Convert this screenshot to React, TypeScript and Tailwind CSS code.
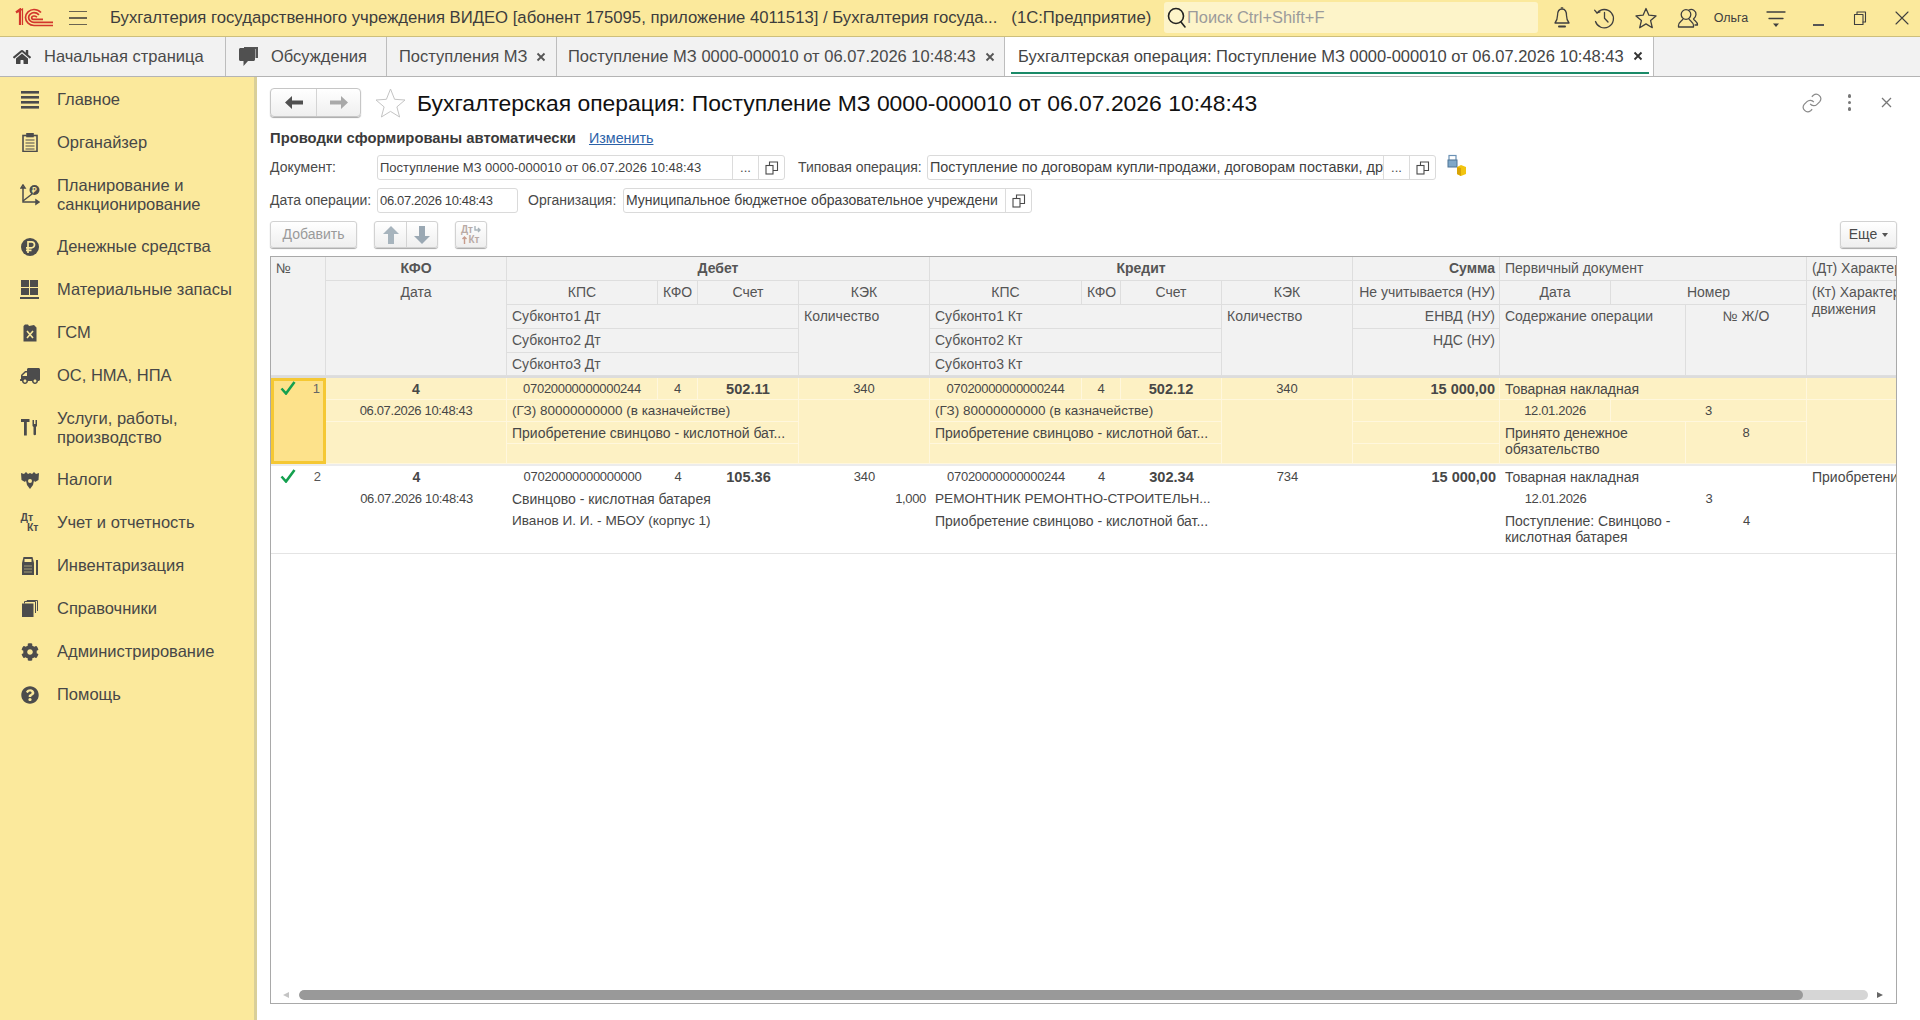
import React from "react";
import { FaCog, FaQuestionCircle, FaTruck, FaHome } from "react-icons/fa";

const ink = "#4c4c4c";

function Logo1C() {
  return (
    <svg width="40" height="20" viewBox="0 0 40 20" fill="none" stroke="#d2372c" strokeWidth="1.7">
      <path d="M1 4.5 5 1.5V17" strokeWidth="2.2" />
      <path d="M3 4 7.5 1V17" strokeWidth="1.2" />
      <path d="M26 4.5C24 2.5 21.5 1.5 19 1.5 14.5 1.5 10.5 5 10.5 9.5S14.5 17.5 19 17.5H38" />
      <path d="M24 6.8C22.8 5.6 21 4.7 19 4.7 16.3 4.7 13.6 6.8 13.6 9.5S16.3 14.4 19 14.4H38" />
      <path d="M22 9.2C21 8.4 20 8 19 8 17.6 8 16.7 8.8 16.7 9.7 16.7 10.7 17.6 11.4 19 11.4H28" />
    </svg>
  );
}

function Icon({ children, w = 24, h = 24, vb = "0 0 24 24", sw = 1.3, color = "#3f3f3f" }: { children: React.ReactNode; w?: number; h?: number; vb?: string; sw?: number; color?: string }) {
  return (
    <svg width={w} height={h} viewBox={vb} fill="none" stroke={color} strokeWidth={sw} strokeLinecap="round" strokeLinejoin="round">
      {children}
    </svg>
  );
}

function TopSlot({ children }: { children: React.ReactNode }) {
  return <div className="w-[42px] h-full flex items-center justify-center shrink-0">{children}</div>;
}

function TitleBar() {
  return (
    <div className="h-[37px] shrink-0 flex items-center bg-[#fbe99c] border-b border-[#cdbf7c] text-[#3d3d3d]">
      <div className="ml-[15px] w-[54px] flex items-center shrink-0"><Logo1C /></div>
      <div className="w-[18px] flex flex-col gap-[5px] shrink-0">
        <div className="h-[1.5px] bg-[#6a6450]" />
        <div className="h-[1.5px] bg-[#6a6450]" />
        <div className="h-[1.5px] bg-[#6a6450]" />
      </div>
      <div className="ml-[23px] w-[1054px] shrink-0 whitespace-nowrap overflow-hidden text-[16.7px]">
        <span>Бухгалтерия государственного учреждения ВИДЕО [абонент 175095, приложение 4011513] / Бухгалтерия госуда...</span>
        <span className="ml-[14px]">(1С:Предприятие)</span>
      </div>
      <div className="w-[374px] h-[31px] mb-[2px] shrink-0 rounded-[3px] bg-[#fdf4c9] flex items-center pl-[1px] text-[16.4px] text-[#9b9b9b]">
        <Icon w={22} h={24} vb="0 0 22 24" sw={1.6} color="#222">
          <circle cx="11" cy="11" r="7.5" />
          <path d="M16 17 20 22" />
        </Icon>
        <span>Поиск Ctrl+Shift+F</span>
      </div>
      <div className="w-[3px] shrink-0" />
      <TopSlot>
        <Icon>
          <path d="M12 3C8.5 3 7.5 6 7.5 9.5 7.5 13 6.5 15 5 17H19C17.5 15 16.5 13 16.5 9.5 16.5 6 15.5 3 12 3Z" />
          <path d="M9 20.5H15" strokeWidth="2" />
          <path d="M11.3 1.8H12.7" />
        </Icon>
      </TopSlot>
      <TopSlot>
        <Icon>
          <path d="M5.2 6.8A9.2 9.2 0 1 1 3.5 15.5" />
          <path d="M2.6 4.2 5 7 8 5.8" />
          <path d="M12.5 6.5V12.2L16 16" />
        </Icon>
      </TopSlot>
      <TopSlot>
        <Icon>
          <path d="M12 2.5 14.9 9.2 22 9.9 16.6 14.6 18.3 21.7 12 17.9 5.7 21.7 7.4 14.6 2 9.9 9.1 9.2Z" />
        </Icon>
      </TopSlot>
      <TopSlot>
        <Icon>
          <circle cx="10" cy="8.5" r="4.8" />
          <path d="M7 13C6 15 2.5 16 2.5 19.5V21H17.5V19.5C17.5 16 14 15 13 13" />
          <path d="M13 4A4.8 4.8 0 0 1 20 8.5C20 10.5 18.5 12 17.5 13 18.5 15 21.5 15.5 21.5 19H19" />
        </Icon>
      </TopSlot>
      <div className="w-[46px] shrink-0 text-[12.5px] text-center pr-[2px]">Ольга</div>
      <TopSlot>
        <Icon>
          <path d="M3 6H21M5 12.5H19" />
          <path d="M9 17.5H15L12 21Z" fill="#3f3f3f" stroke="none" />
        </Icon>
      </TopSlot>
      <TopSlot>
        <div className="w-[11px] h-[1.5px] bg-[#555] mt-[14px]" />
      </TopSlot>
      <TopSlot>
        <Icon w={16} h={16} vb="0 0 16 16" sw={1.1}>
          <rect x="2.5" y="4.5" width="8.5" height="10" />
          <path d="M5 4V2H13.5V12H11" />
        </Icon>
      </TopSlot>
      <TopSlot>
        <Icon w={16} h={16} vb="0 0 16 16" sw={1.1}>
          <path d="M2 2 14 14M14 2 2 14" />
        </Icon>
      </TopSlot>
    </div>
  );
}

function X({ dark }: { dark?: boolean }) {
  return (
    <svg width="10" height="10" viewBox="0 0 10 10" stroke={dark ? "#333" : "#555"} strokeWidth="1.8">
      <path d="M1.5 1.5 8.5 8.5M8.5 1.5 1.5 8.5" />
    </svg>
  );
}

function TabBar() {
  return (
    <div className="h-[40px] shrink-0 flex bg-[#f2f2f2] border-b border-[#b4b4b4] text-[16.5px] text-[#4a4a4a] whitespace-nowrap">
      <div className="w-[226px] border-r border-[#bdbdbd] flex items-center pl-[13px] gap-[13px]">
        <FaHome size={18} color="#454545" />
        <span>Начальная страница</span>
      </div>
      <div className="w-[161px] border-r border-[#bdbdbd] flex items-center pl-[12px] gap-[12px]">
        <svg width="21" height="23" viewBox="0 0 21 23">
          <path d="M6 2H20V13H17.5V4H6Z" fill="#555" />
          <path d="M1 4.5C1 3.7 1.7 3 2.5 3H15.5C16.3 3 17 3.7 17 4.5V14.5C17 15.3 16.3 16 15.5 16H10L5.5 21V16H2.5C1.7 16 1 15.3 1 14.5Z" fill="#505050" />
        </svg>
        <span>Обсуждения</span>
      </div>
      <div className="w-[170px] border-r border-[#bdbdbd] flex items-center pl-[12px] gap-[8px]">
        <span>Поступления МЗ</span>
        <X />
      </div>
      <div className="w-[448px] border-r border-[#bdbdbd] flex items-center pl-[11px] gap-[9px]">
        <span>Поступление МЗ 0000-000010 от 06.07.2026 10:48:43</span>
        <X />
      </div>
      <div className="w-[649px] border-r border-[#bdbdbd] bg-white flex flex-col">
        <div className="flex-1 flex items-center pl-[13px] pt-[3px] gap-[9px] text-[#444]">
          <span>Бухгалтерская операция: Поступление МЗ 0000-000010 от 06.07.2026 10:48:43</span>
          <X dark />
        </div>
        <div className="h-[2px] ml-[6px] mr-[4px] mb-[2px] bg-[#1a8a68]" />
      </div>
    </div>
  );
}

function NavItem({ icon, lines }: { icon: React.ReactNode; lines: string[] }) {
  return (
    <div className={"flex items-center pl-[16px] text-[16.5px] leading-[19px] text-[#474747] " + (lines.length > 1 ? "py-[11.5px]" : "py-[12px]")}>
      <div className="w-[27px] h-[19px] flex items-center justify-center shrink-0">{icon}</div>
      <div className="ml-[14px]">
        {lines.map((l) => (
          <div key={l} className="whitespace-nowrap">{l}</div>
        ))}
      </div>
    </div>
  );
}

function Sidebar() {
  const items: { icon: React.ReactNode; lines: string[] }[] = [
    { lines: ["Главное"], icon: (
      <svg width="18" height="18" viewBox="0 0 18 18" fill={ink}><rect y="0" width="18" height="2.6" /><rect y="5" width="18" height="2.6" /><rect y="10" width="18" height="2.6" /><rect y="15" width="18" height="2.6" /></svg>
    ) },
    { lines: ["Органайзер"], icon: (
      <svg width="16" height="19" viewBox="0 0 16 19" fill="none" stroke={ink} strokeWidth="1.6"><rect x="1" y="2.5" width="14" height="16" /><rect x="5" y="0.5" width="6" height="3" fill={ink} /><path d="M3.5 7H12.5M3.5 10H12.5M3.5 13H12.5M3.5 16H12.5" strokeWidth="1.2" /></svg>
    ) },
    { lines: ["Планирование и", "санкционирование"], icon: (
      <svg width="20" height="22" viewBox="0 0 20 22" fill="none" stroke={ink} strokeWidth="1.5"><path d="M3 3V18H19M3 1 1 4H5ZM19 18 16 16V20Z" /><path d="M3 17 12 10" /><circle cx="14.5" cy="6" r="5" fill={ink} stroke="none" /><text x="14.5" y="9" fontSize="8" fontWeight="700" textAnchor="middle" fill="#fbe99c" stroke="none" fontFamily="Liberation Sans">₽</text></svg>
    ) },
    { lines: ["Денежные средства"], icon: (
      <svg width="18" height="18" viewBox="0 0 18 18"><circle cx="9" cy="9" r="9" fill={ink} /><path d="M7 15V3.8H10.5A3 3 0 0 1 10.5 9.8H5M5 12.3H10.5" fill="none" stroke="#fbe99c" strokeWidth="1.7" /></svg>
    ) },
    { lines: ["Материальные запасы"], icon: (
      <svg width="19" height="19" viewBox="0 0 19 19" fill={ink}><rect x="1" y="0" width="8" height="7" /><rect x="10" y="0" width="8" height="7" /><rect x="1" y="8" width="8" height="7" /><rect x="10" y="8" width="8" height="7" /><rect y="17" width="19" height="2" /></svg>
    ) },
    { lines: ["ГСМ"], icon: (
      <svg width="14" height="18" viewBox="0 0 14 18"><path d="M0.5 2 2 0.5H5L6 2 11 1 13.5 3.5V17.5H0.5Z" fill={ink} /><path d="M4 7 10 14M10 7 4 14" stroke="#fbe99c" strokeWidth="1.6" /></svg>
    ) },
    { lines: ["ОС, НМА, НПА"], icon: <FaTruck size={20} color={ink} className="scale-x-[-1]" /> },
    { lines: ["Услуги, работы,", "производство"], icon: (
      <svg width="17" height="17" viewBox="0 0 17 17" fill={ink}><path d="M0 0H8.5V3H5.8V16.5H3V3H0Z" /><path d="M11.5 1H13V5H14.5V1H16V7L15 8V15.5A1.5 1.5 0 0 1 12.5 15.5V8L11.5 7Z" /></svg>
    ) },
    { lines: ["Налоги"], icon: (
      <svg width="18" height="18" viewBox="0 0 18 18" fill={ink}><path d="M0 2 3 3 5 1 7 3 9 2 11 3 13 1 15 3 18 2 17.5 9 14 11 13 9.5 12 14 9 18 6 14 5 9.5 4 11 0.5 9Z" /><circle cx="9" cy="10" r="2" fill="#fbe99c" /></svg>
    ) },
    { lines: ["Учет и отчетность"], icon: (
      <div className="w-[18px] h-[19px] flex flex-col text-[10.5px] font-bold leading-[9.5px] text-[#4c4c4c]">
        <span>Дт</span>
        <span className="self-end">Кт</span>
      </div>
    ) },
    { lines: ["Инвентаризация"], icon: (
      <svg width="16" height="18" viewBox="0 0 16 18" fill={ink}><path d="M0 6 1.5 0H10.5L12 6V18H0Z" /><rect x="2.5" y="2" width="7" height="3" fill="#fbe99c" /><path d="M2.5 9H9.5M2.5 12H9.5M2.5 15H9.5" stroke="#fbe99c" strokeWidth="1" strokeDasharray="1 1" /><rect x="14" y="3" width="2" height="15" /></svg>
    ) },
    { lines: ["Справочники"], icon: (
      <svg width="16" height="17" viewBox="0 0 16 17" fill="none" stroke={ink} strokeWidth="1"><rect x="0" y="4" width="11" height="13" fill={ink} /><path d="M2.5 3.5V1.5H13.5V13M5 1V0.5H15.5V11" /></svg>
    ) },
    { lines: ["Администрирование"], icon: <FaCog size={18} color={ink} /> },
    { lines: ["Помощь"], icon: <FaQuestionCircle size={18} color={ink} /> },
  ];
  return (
    <div className="w-[257px] shrink-0 pt-[1px] bg-[#fbe99c] border-r-[3px] border-[#d9cf99]">
      {items.map((it) => (
        <NavItem key={it.lines[0]} icon={it.icon} lines={it.lines} />
      ))}
    </div>
  );
}

function CopyIcon() {
  return (
    <svg width="14" height="14" viewBox="0 0 14 14" fill="none" stroke="#4a4a4a" strokeWidth="1.1">
      <rect x="1" y="4.5" width="7" height="8.5" />
      <path d="M4.5 4.5V1H12.5V9.5H8" />
    </svg>
  );
}

function FieldBtn({ children }: { children: React.ReactNode }) {
  return <div className="w-[26px] h-full shrink-0 border-l border-[#dcdcdc] flex items-center justify-center text-[13px] text-[#4a4a4a]">{children}</div>;
}

function Field({ w, text, dots, copy, size }: { w: string; text: string; dots?: boolean; copy?: boolean; size: string }) {
  return (
    <div className={"h-[25px] shrink-0 flex items-center border border-[#dadada] rounded-[3px] bg-white text-[#3f3f3f] " + w}>
      <div className={"flex-1 min-w-0 pl-[2px] whitespace-nowrap overflow-hidden " + size}>{text}</div>
      {dots && <FieldBtn>...</FieldBtn>}
      {copy && <FieldBtn><CopyIcon /></FieldBtn>}
    </div>
  );
}

const btn = "h-[27px] shrink-0 rounded-[3px] border border-[#d2d2d2] bg-linear-to-b from-white to-[#efefef] shadow-[0_1px_1px_#a8a8a8] flex items-center justify-center";

function FormHead() {
  return (
    <div className="flex items-start pt-[11px] h-[47px] shrink-0">
      <div className="w-[91px] h-[29px] shrink-0 rounded-[4px] border border-[#c6c6c6] bg-linear-to-b from-white to-[#efefef] shadow-[0_1px_1px_#a8a8a8] flex">
        <div className="w-[46px] border-r border-[#d4d4d4] flex items-center justify-center">
          <svg width="18" height="13" viewBox="0 0 18 13" fill="#505050"><path d="M7 0V4.5H18V8.5H7V13L0 6.5Z" /></svg>
        </div>
        <div className="flex-1 flex items-center justify-center">
          <svg width="18" height="13" viewBox="0 0 18 13" fill="#a9a9a9"><path d="M11 0V4.5H0V8.5H11V13L18 6.5Z" /></svg>
        </div>
      </div>
      <div className="ml-[14px] shrink-0">
        <svg width="31" height="30" viewBox="0 0 31 30" fill="none" stroke="#c4c4c4" strokeWidth="1">
          <path d="M15.5 1 19.6 11.3 30 12 21.9 18.9 24.6 29 15.5 23.4 6.4 29 9.1 18.9 1 12 11.4 11.3Z" />
        </svg>
      </div>
      <h1 className="ml-[11px] text-[22.9px] leading-[30px] text-[#111] whitespace-nowrap flex-1">
        Бухгалтерская операция: Поступление МЗ 0000-000010 от 06.07.2026 10:48:43
      </h1>
      <div className="flex items-center h-[29px] pr-[5px] gap-[25px]">
        <svg width="22" height="22" viewBox="0 0 24 24" fill="none" stroke="#8a8a8a" strokeWidth="1.3">
          <path d="M10 13a5 5 0 0 0 7.5.5l3-3a5 5 0 0 0-7-7l-1.7 1.7" />
          <path d="M14 11a5 5 0 0 0-7.5-.5l-3 3a5 5 0 0 0 7 7l1.7-1.7" />
        </svg>
        <div className="flex flex-col gap-[3px]">
          <div className="w-[3.5px] h-[3.5px] rounded-full bg-[#777]" />
          <div className="w-[3.5px] h-[3.5px] rounded-full bg-[#777]" />
          <div className="w-[3.5px] h-[3.5px] rounded-full bg-[#777]" />
        </div>
        <svg className="ml-[5px]" width="11" height="11" viewBox="0 0 11 11" stroke="#777" strokeWidth="1.3"><path d="M1 1 10 10M10 1 1 10" /></svg>
      </div>
    </div>
  );
}

function Form() {
  return (
    <div className="shrink-0 text-[14px] text-[#4a4a4a]">
      <div className="h-[27px] pt-[2px] flex items-center gap-[13px]">
        <span className="font-bold text-[14.8px] text-[#3a3a3a]">Проводки сформированы автоматически</span>
        <span className="text-[14.3px] text-[#2c62a8] underline">Изменить</span>
      </div>
      <div className="h-[33px] flex items-center">
        <span className="w-[107px] shrink-0">Документ:</span>
        <Field w="w-[408px]" size="text-[13px]" text="Поступление МЗ 0000-000010 от 06.07.2026 10:48:43" dots copy />
        <span className="ml-[13px] w-[129px] shrink-0 whitespace-nowrap">Типовая операция:</span>
        <Field w="w-[509px]" size="text-[14.4px]" text="Поступление по договорам купли-продажи, договорам поставки, дру" dots copy />
        <svg className="ml-[10px] mb-[4px]" width="24" height="24" viewBox="0 0 24 24">
          <rect x="3" y="1.5" width="7" height="5" fill="none" stroke="#6c92b5" strokeWidth="1.2" />
          <rect x="2" y="6" width="9" height="7" fill="#7fa8c9" stroke="#4e7596" />
          <path d="M11 13 15 11 20 13V20L15 22 11 20Z" fill="#f2c40f" />
          <path d="M15 14V22L11 20V13Z" fill="#d8a406" />
        </svg>
      </div>
      <div className="h-[33px] flex items-center">
        <span className="w-[107px] shrink-0 whitespace-nowrap">Дата операции:</span>
        <Field w="w-[141px]" size="text-[13px] tracking-[-0.35px]" text="06.07.2026 10:48:43" />
        <span className="ml-[10px] w-[95px] shrink-0">Организация:</span>
        <Field w="w-[409px]" size="text-[14px]" text="Муниципальное бюджетное образовательное учреждени" copy />
      </div>
      <div className="h-[39px] flex items-start pt-[4px]">
        <div className={btn + " w-[87px] text-[#9a9a9a]"}>Добавить</div>
        <div className={btn + " ml-[17px] w-[64px]"}>
          <div className="w-[32px] h-full border-r border-[#d4d4d4] flex items-center justify-center">
            <svg width="16" height="18" viewBox="0 0 16 18" fill="#a7b4bd"><path d="M8 0 16 8H11V18H5V8H0Z" /></svg>
          </div>
          <div className="flex-1 flex items-center justify-center">
            <svg width="16" height="18" viewBox="0 0 16 18" fill="#9aa8b3"><path d="M8 18 0 10H5V0H11V10H16Z" /></svg>
          </div>
        </div>
        <div className={btn + " ml-[17px] w-[32px] flex-col text-[10px] leading-[10px] font-bold text-[#b9aaa5]"}>
          <div className="flex items-center gap-[1px]">
            <span>Дт</span>
            <svg width="7" height="8" viewBox="0 0 7 8" fill="none" stroke="#a9b4bb" strokeWidth="1.4"><path d="M1 0V4H6M4 2 6 4 4 6" /></svg>
          </div>
          <div className="flex items-center gap-[1px]">
            <svg width="5" height="8" viewBox="0 0 5 8" fill="none" stroke="#c89c8c" strokeWidth="1.4"><path d="M2.5 8V1M0.5 3 2.5 1 4.5 3" /></svg>
            <span>Кт</span>
          </div>
        </div>
        <div className="flex-1" />
        <div className={btn + " w-[57px] gap-[5px] text-[#4a4a4a]"}>
          <span>Еще</span>
          <svg width="6" height="4" viewBox="0 0 6 4" fill="#555"><path d="M0 0H6L3 4Z" /></svg>
        </div>
      </div>
    </div>
  );
}

function H({ c, children }: { c: string; children?: React.ReactNode }) {
  return (
    <div className={"bg-[#f2f2f2] border-r border-b border-[#dedede] px-[5px] pt-[3px] overflow-hidden whitespace-nowrap leading-[17px] text-[#555] " + c}>
      {children}
    </div>
  );
}

function A({ c, children }: { c: string; children?: React.ReactNode }) {
  return (
    <div className={"bg-[#fdf1c4] border-r border-b border-[#fff7dd] px-[5px] pt-[3px] overflow-hidden whitespace-nowrap leading-[16px] text-[#474747] " + c}>
      {children}
    </div>
  );
}

function B({ c, children }: { c: string; children?: React.ReactNode }) {
  return (
    <div className={"bg-white px-[5px] pt-[3px] overflow-hidden whitespace-nowrap leading-[16px] text-[#474747] " + c}>
      {children}
    </div>
  );
}

function Check() {
  return (
    <svg width="16" height="14" viewBox="0 0 16 14" fill="none" stroke="#14a04f" strokeWidth="2.6">
      <path d="M1.5 7.5 6 12.5 14.5 1" />
    </svg>
  );
}

function Table() {
  return (
    <div className="flex-1 min-h-0 flex flex-col border border-[#a9a9a9] text-[14px] bg-white">
      <div className="grid grid-cols-[55px_181px_151px_40px_101px_131px_152px_39px_101px_131px_147px_111px_75px_121px_90px] grid-rows-[24px_24px_24px_24px_23px_2px_22px_22px_22px_20px_2px_22px_22px_22px_21px_1px] overflow-hidden">
        {/* header */}
        <H c="col-[1/2] row-[1/6]">№</H>
        <H c="col-[2/3] row-[1/2] text-center font-bold">КФО</H>
        <H c="col-[2/3] row-[2/6] text-center">Дата</H>
        <H c="col-[3/7] row-[1/2] text-center font-bold">Дебет</H>
        <H c="col-[3/4] row-[2/3] text-center">КПС</H>
        <H c="col-[4/5] row-[2/3] text-center px-[2px]">КФО</H>
        <H c="col-[5/6] row-[2/3] text-center">Счет</H>
        <H c="col-[6/7] row-[2/3] text-center">КЭК</H>
        <H c="col-[3/6] row-[3/4]">Субконто1 Дт</H>
        <H c="col-[3/6] row-[4/5]">Субконто2 Дт</H>
        <H c="col-[3/6] row-[5/6]">Субконто3 Дт</H>
        <H c="col-[6/7] row-[3/6]">Количество</H>
        <H c="col-[7/11] row-[1/2] text-center font-bold">Кредит</H>
        <H c="col-[7/8] row-[2/3] text-center">КПС</H>
        <H c="col-[8/9] row-[2/3] text-center px-[2px]">КФО</H>
        <H c="col-[9/10] row-[2/3] text-center">Счет</H>
        <H c="col-[10/11] row-[2/3] text-center">КЭК</H>
        <H c="col-[7/10] row-[3/4]">Субконто1 Кт</H>
        <H c="col-[7/10] row-[4/5]">Субконто2 Кт</H>
        <H c="col-[7/10] row-[5/6]">Субконто3 Кт</H>
        <H c="col-[10/11] row-[3/6]">Количество</H>
        <H c="col-[11/12] row-[1/2] text-right font-bold pr-[4px]">Сумма</H>
        <H c="col-[11/12] row-[2/3] text-right pr-[4px]">Не учитывается (НУ)</H>
        <H c="col-[11/12] row-[3/4] text-right pr-[4px]">ЕНВД (НУ)</H>
        <H c="col-[11/12] row-[4/6] text-right pr-[4px]">НДС (НУ)</H>
        <H c="col-[12/15] row-[1/2]">Первичный документ</H>
        <H c="col-[12/13] row-[2/3] text-center">Дата</H>
        <H c="col-[13/15] row-[2/3] text-center">Номер</H>
        <H c="col-[12/14] row-[3/6]">Содержание операции</H>
        <H c="col-[14/15] row-[3/6] text-center">№ Ж/О</H>
        <H c="col-[15/16] row-[1/2]">(Дт) Характер движения</H>
        <H c="col-[15/16] row-[2/6] leading-[16px]">(Кт) Характер движения<br />движения</H>
        <div className="col-[1/-1] row-[6/7] bg-[#dcdcdc]" />

        {/* row 1 */}
        <div className="col-[1/2] row-[7/11] bg-[#fde28b] border-[3px] border-[#f5c833] flex justify-between pl-[6px] pr-[3px] leading-[16px] text-[13px] text-[#666]">
          <Check />
          <span>1</span>
        </div>
        <A c="col-[2/3] row-[7/8] text-center font-bold">4</A>
        <A c="col-[2/3] row-[8/9] text-center text-[13px] tracking-[-0.35px]">06.07.2026 10:48:43</A>
        <A c="col-[2/3] row-[9/11]" />
        <A c="col-[3/4] row-[7/8] text-center text-[13px] tracking-[-0.3px]">07020000000000244</A>
        <A c="col-[4/5] row-[7/8] text-center text-[13px]">4</A>
        <A c="col-[5/6] row-[7/8] text-center font-bold text-[14.6px]">502.11</A>
        <A c="col-[6/7] row-[7/8] text-center text-[13px]">340</A>
        <A c="col-[3/6] row-[8/9] text-[13.5px]">(ГЗ) 80000000000 (в казначействе)</A>
        <A c="col-[3/6] row-[9/10]">Приобретение свинцово - кислотной бат...</A>
        <A c="col-[3/6] row-[10/11]" />
        <A c="col-[6/7] row-[8/11]" />
        <A c="col-[7/8] row-[7/8] text-center text-[13px] tracking-[-0.3px]">07020000000000244</A>
        <A c="col-[8/9] row-[7/8] text-center text-[13px]">4</A>
        <A c="col-[9/10] row-[7/8] text-center font-bold text-[14.6px]">502.12</A>
        <A c="col-[10/11] row-[7/8] text-center text-[13px]">340</A>
        <A c="col-[7/10] row-[8/9] text-[13.5px]">(ГЗ) 80000000000 (в казначействе)</A>
        <A c="col-[7/10] row-[9/10]">Приобретение свинцово - кислотной бат...</A>
        <A c="col-[7/10] row-[10/11]" />
        <A c="col-[10/11] row-[8/11]" />
        <A c="col-[11/12] row-[7/8] text-right font-bold text-[14.5px] pr-[4px]">15 000,00</A>
        <A c="col-[11/12] row-[8/9]" />
        <A c="col-[11/12] row-[9/10]" />
        <A c="col-[11/12] row-[10/11]" />
        <A c="col-[12/15] row-[7/8]">Товарная накладная</A>
        <A c="col-[12/13] row-[8/9] text-center text-[13px] tracking-[-0.35px]">12.01.2026</A>
        <A c="col-[13/15] row-[8/9] text-center text-[13px]">3</A>
        <A c="col-[12/14] row-[9/11]">Принято денежное<br />обязательство</A>
        <A c="col-[14/15] row-[9/11] text-center text-[13px]">8</A>
        <A c="col-[15/16] row-[7/8]" />
        <A c="col-[15/16] row-[8/11]" />
        <div className="col-[1/-1] row-[11/12] bg-[#ececec]" />

        {/* row 2 */}
        <div className="col-[1/2] row-[12/16] flex justify-between pl-[9px] pr-[5px] pt-[3px] leading-[16px] text-[13px] text-[#555]">
          <Check />
          <span>2</span>
        </div>
        <B c="col-[2/3] row-[12/13] text-center font-bold">4</B>
        <B c="col-[2/3] row-[13/14] text-center text-[13px] tracking-[-0.35px]">06.07.2026 10:48:43</B>
        <B c="col-[3/4] row-[12/13] text-center text-[13px] tracking-[-0.3px]">07020000000000000</B>
        <B c="col-[4/5] row-[12/13] text-center text-[13px]">4</B>
        <B c="col-[5/6] row-[12/13] text-center font-bold text-[14.6px]">105.36</B>
        <B c="col-[6/7] row-[12/13] text-center text-[13px]">340</B>
        <B c="col-[3/6] row-[13/14]">Свинцово - кислотная батарея</B>
        <B c="col-[3/6] row-[14/16] text-[13.6px]">Иванов И. И. - МБОУ (корпус 1)</B>
        <B c="col-[6/7] row-[13/14] text-right text-[13px] tracking-[-0.35px] pr-[4px]">1,000</B>
        <B c="col-[7/8] row-[12/13] text-center text-[13px] tracking-[-0.3px]">07020000000000244</B>
        <B c="col-[8/9] row-[12/13] text-center text-[13px]">4</B>
        <B c="col-[9/10] row-[12/13] text-center font-bold text-[14.6px]">302.34</B>
        <B c="col-[10/11] row-[12/13] text-center text-[13px]">734</B>
        <B c="col-[7/10] row-[13/14] text-[13.6px]">РЕМОНТНИК РЕМОНТНО-СТРОИТЕЛЬН...</B>
        <B c="col-[7/10] row-[14/16]">Приобретение свинцово - кислотной бат...</B>
        <B c="col-[11/12] row-[12/13] text-right font-bold text-[14.5px] pr-[4px]">15 000,00</B>
        <B c="col-[12/15] row-[12/13]">Товарная накладная</B>
        <B c="col-[12/13] row-[13/14] text-center text-[13px] tracking-[-0.35px]">12.01.2026</B>
        <B c="col-[13/15] row-[13/14] text-center text-[13px]">3</B>
        <B c="col-[12/14] row-[14/16]">Поступление: Свинцово -<br />кислотная батарея</B>
        <B c="col-[14/15] row-[14/16] text-center text-[13px]">4</B>
        <B c="col-[15/16] row-[12/13]">Приобретение свинцово</B>
        <div className="col-[1/-1] row-[16/17] bg-[#e4e4e4]" />
      </div>
      <div className="flex-1" />
      <div className="h-[10px] mb-[3px] flex items-center">
        <div className="w-[10px] ml-[10px] flex justify-center">
          <svg width="6" height="6" viewBox="0 0 6 6" fill="#c4c4c4"><path d="M6 0V6L0 3Z" /></svg>
        </div>
        <div className="ml-[8px] w-[1569px] h-[10px] rounded-full bg-[#d6d6d6] overflow-hidden">
          <div className="w-[1504px] h-full rounded-full bg-[#999]" />
        </div>
        <div className="ml-[9px]">
          <svg width="6" height="6" viewBox="0 0 6 6" fill="#666"><path d="M0 0V6L6 3Z" /></svg>
        </div>
      </div>
    </div>
  );
}

export default function App() {
  return (
    <div className="w-full h-screen overflow-hidden flex flex-col bg-white font-['Liberation_Sans',Arial,sans-serif]">
      <TitleBar />
      <TabBar />
      <div className="flex-1 min-h-0 flex">
        <Sidebar />
        <div className="flex-1 min-w-0 flex flex-col pl-[13px] pr-[23px] pb-[16px]">
          <FormHead />
          <Form />
          <Table />
        </div>
      </div>
    </div>
  );
}
